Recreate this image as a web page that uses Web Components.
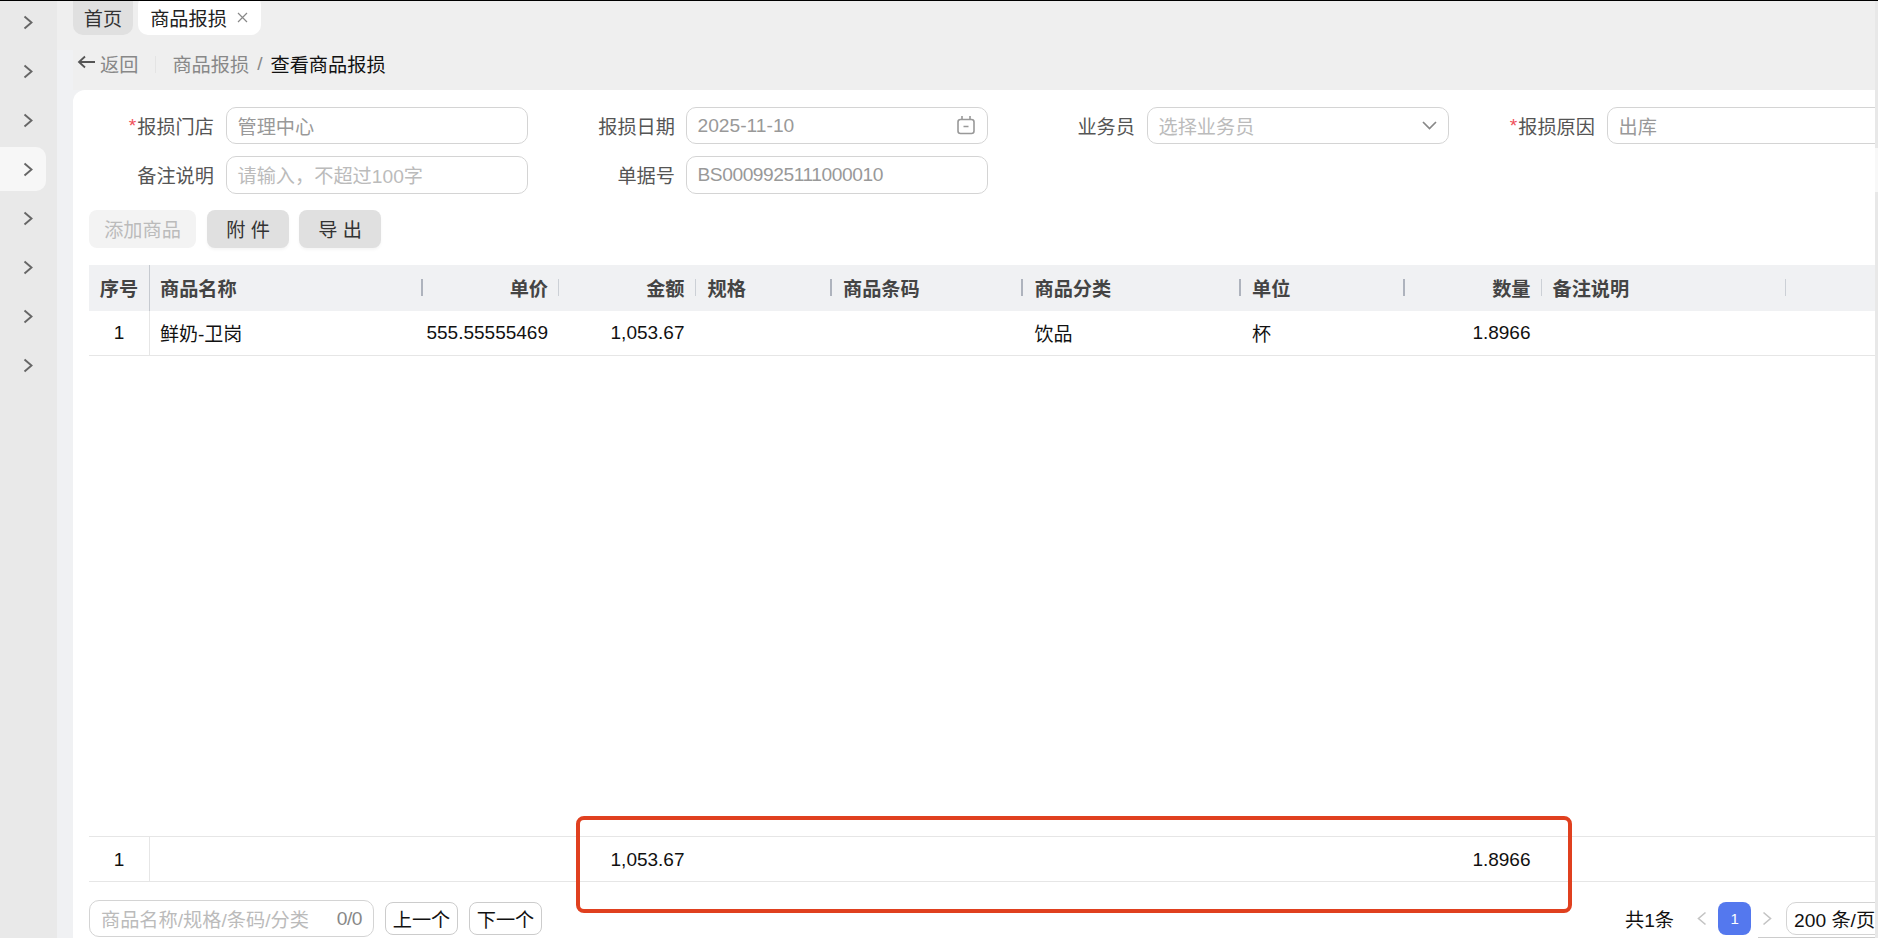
<!DOCTYPE html>
<html lang="zh">
<head>
<meta charset="utf-8">
<title>查看商品报损</title>
<style>
  html, body { margin: 0; height: 100%; overflow: hidden; }
  body { font: 19.2px "Liberation Sans", "Noto Sans CJK SC", sans-serif; color: #111; }
</style>
</head>
<body>
<app-shell>
  <side-nav slot="nav" count="8" active="3"></side-nav>
  <tab-bar slot="tabs"></tab-bar>
  <bread-crumb slot="tabs"></bread-crumb>
  <detail-card slot="card">
    <form-field slot="form" label="报损门店" required value="管理中心"></form-field>
    <form-field slot="form" label="报损日期" value="2025-11-10" icon="calendar" nudge></form-field>
    <form-field slot="form" label="业务员" placeholder="选择业务员" icon="chevron"></form-field>
    <form-field slot="form" label="报损原因" required value="出库"></form-field>
    <form-field slot="form" label="备注说明" placeholder="请输入，不超过100字"></form-field>
    <form-field slot="form" label="单据号" value="BS0009925111000010" tight nudge></form-field>
    <action-button slot="actions" disabled>添加商品</action-button>
    <action-button slot="actions">附 件</action-button>
    <action-button slot="actions">导 出</action-button>
    <goods-table slot="table"></goods-table>
    <table-footer slot="footer"></table-footer>
  </detail-card>
</app-shell>

<script>
const chevron = (dir, color, stroke) => {
  const pts = dir === 'left' ? '8.5,1.5 1.5,7.5 8.5,13.5' : '1.5,1.5 8.5,7.5 1.5,13.5';
  return `<svg width="10" height="15" viewBox="0 0 10 15" fill="none"><polyline points="${pts}" stroke="${color}" stroke-width="${stroke}"/></svg>`;
};

class AppShell extends HTMLElement {
  constructor() {
    super();
    this.attachShadow({ mode: 'open' });
    this.shadowRoot.innerHTML = `
    <style>
      :host { display: flex; height: 938px; position: relative; overflow: hidden; background: #efefef; }
      :host::before { content: ""; position: absolute; left: 0; right: 0; top: 0; height: 1px; background: #000; z-index: 3; }
      .main { flex: 1; min-width: 0; display: flex; flex-direction: column; padding-left: 16px;
        background: linear-gradient(#efefef 50px, #f0f1f3 50px); }
      .top { background: #efefef; }
      .bar { flex: 0 0 3px; background: #e8e8e8; padding-top: 148px; box-sizing: border-box; }
      .bar div { height: 44px; background: #f8f8f8; }
      .mark { position: absolute; left: 576px; top: 816px; width: 996px; height: 97px; box-sizing: border-box;
        border: 4px solid #e0401f; border-radius: 8px; z-index: 2; }
    </style>
    <slot name="nav"></slot>
    <div class="main">
      <div class="top"><slot name="tabs"></slot></div>
      <slot name="card"></slot>
    </div>
    <div class="bar"><div></div></div>
    <div class="mark"></div>`;
  }
}

class SideNav extends HTMLElement {
  connectedCallback() {
    const count = Number(this.getAttribute('count'));
    const active = Number(this.getAttribute('active'));
    let items = '';
    for (let i = 0; i < count; i++) {
      items += `<div class="item ${i === active ? 'on' : ''}">${chevron('right', '#666', 1.9)}</div>`;
    }
    this.attachShadow({ mode: 'open' }).innerHTML = `
    <style>
      :host { display: flex; flex-direction: column; gap: 5px; flex: 0 0 57px; background: #e9e9e9; }
      .item { height: 44px; width: 46px; display: flex; align-items: center; padding-left: 23px; box-sizing: border-box; border-radius: 0 10px 10px 0; }
      .on { background: #f7f7f7; }
    </style>${items}`;
  }
}

class TabBar extends HTMLElement {
  constructor() {
    super();
    this.attachShadow({ mode: 'open' });
    this.shadowRoot.innerHTML = `
    <style>
      :host { display: flex; gap: 5px; height: 35px; }
      .tab { display: flex; align-items: center; justify-content: center; gap: 10px; border-radius: 0 0 10px 10px; color: #333; background: #e0e0e0; width: 60px; }
      .cur { background: #fff; width: 123px; border-radius: 10px; margin-top: -5px; padding-top: 5px; color: #222; padding-right: 1px; box-sizing: border-box; height: 40px; }
      svg { display: block; }
    </style>
    <div class="tab">首页</div>
    <div class="tab cur">商品报损
      <svg width="11" height="11" viewBox="0 0 11 11"><path d="M1 1l9 9M10 1l-9 9" stroke="#888" stroke-width="1.2"/></svg>
    </div>`;
  }
}

class BreadCrumb extends HTMLElement {
  constructor() {
    super();
    this.attachShadow({ mode: 'open' });
    this.shadowRoot.innerHTML = `
    <style>
      :host { display: flex; align-items: center; height: 52px; padding: 3px 0 0 4px; color: #888; }
      svg { display: block; margin: -5px 5px 0 0; }
      .line { width: 1px; height: 17px; background: #e4e4e4; margin: 0 16px 0 17px; }
      .sep { margin: 0 8px; }
      .now { color: #111; }
    </style>
    <svg width="18" height="14" viewBox="0 0 18 14" fill="none"><path d="M18 7H2M8 1.5L2 7l6 5.5" stroke="#555" stroke-width="1.8"/></svg>
    <span>返回</span><div class="line"></div>
    <span>商品报损</span><span class="sep">/</span><span class="now">查看商品报损</span>`;
  }
}

class DetailCard extends HTMLElement {
  constructor() {
    super();
    this.attachShadow({ mode: 'open' });
    this.shadowRoot.innerHTML = `
    <style>
      :host { display: flex; flex-direction: column; height: 848px; background: #fff; border-radius: 12px 0 0 0; padding: 17px 0 0 16px; box-sizing: border-box; overflow: hidden; position: relative; }
      .form { display: grid; grid-template-columns: 125px 302px 134px 302px 135px 302px 134px 302px; grid-template-rows: 37px 38px; gap: 12px; }
      .actions { display: flex; gap: 10px; margin: 16px 0 17px; }
      .table { flex: 1; min-height: 0; display: flex; }
    </style>
    <div class="form"><slot name="form"></slot></div>
    <div class="actions"><slot name="actions"></slot></div>
    <div class="table"><slot name="table"></slot></div>
    <slot name="footer"></slot>`;
  }
}

class FormField extends HTMLElement {
  connectedCallback() {
    const required = this.hasAttribute('required');
    const value = this.getAttribute('value');
    const text = value || this.getAttribute('placeholder') || '';
    const icon = this.getAttribute('icon');
    let iconHtml = '';
    if (icon === 'calendar') {
      iconHtml = `<svg width="20" height="19" viewBox="0 0 20 19" fill="none" stroke="#999" stroke-width="1.6"><rect x="2" y="3.5" width="16" height="14" rx="2.5"/><path d="M6 0v4M14 0v4M7.5 10.5h5"/></svg>`;
    } else if (icon === 'chevron') {
      iconHtml = `<svg width="15" height="9" viewBox="0 0 15 9" fill="none"><polyline points="1,1 7.5,7.5 14,1" stroke="#888" stroke-width="1.7"/></svg>`;
    }
    this.attachShadow({ mode: 'open' }).innerHTML = `
    <style>
      :host { display: contents; }
      .label { display: flex; align-items: center; justify-content: flex-end; color: #555; white-space: nowrap; }
      .nudge { margin-right: -1px; }
      .req { color: #f0505a; padding-right: 1px; }
      .box { height: 100%; box-sizing: border-box; border: 1px solid #d4d4d4; border-radius: 10px; padding: 0 11px 0 10.5px; display: flex; align-items: center; justify-content: space-between; }
      .val { color: #999; white-space: nowrap; }
      .ph { color: #bbb; }
      .tight { letter-spacing: -0.45px; }
    </style>
    <div class="label ${this.hasAttribute('nudge') ? 'nudge' : ''}">${required ? '<span class="req">*</span>' : ''}${this.getAttribute('label')}</div>
    <div class="box"><span class="val ${value ? '' : 'ph'} ${this.hasAttribute('tight') ? 'tight' : ''}">${text}</span>${iconHtml}</div>`;
  }
}

class ActionButton extends HTMLElement {
  constructor() {
    super();
    this.attachShadow({ mode: 'open' });
    this.shadowRoot.innerHTML = `
    <style>
      :host { display: flex; align-items: center; justify-content: center; height: 38px; width: 82px; border-radius: 8px; background: #e0e0e0; color: #333; white-space: pre; box-shadow: 0 2px 3px rgba(0,0,0,.04); }
      :host([disabled]) { width: 107px; margin-right: 1px; background: #f3f3f3; color: #bbb; box-shadow: none; }
    </style>
    <slot></slot>`;
  }
}

const COLUMNS = [
  { title: '序号', width: 61, align: 'center', fixed: true },
  { title: '商品名称', width: 273, sep: 2, pad: 10 },
  { title: '单价', width: 136, align: 'right', sep: 1 },
  { title: '金额', width: 136.5, align: 'right', sep: 1 },
  { title: '规格', width: 136.5, sep: 2 },
  { title: '商品条码', width: 191, sep: 2, pad: 11 },
  { title: '商品分类', width: 218, sep: 2, pad: 11.5 },
  { title: '单位', width: 164, sep: 2, pad: 11 },
  { title: '数量', width: 136.5, align: 'right', sep: 1 },
  { title: '备注说明', width: 244.5, sep: 1, pad: 11 },
  { title: '', width: 73 }
];
const ROW = ['1', '鲜奶-卫岗', '555.55555469', '1,053.67', '', '', '饮品', '杯', '1.8966', '', ''];
const SUM = ['1', '', '', '1,053.67', '', '', '', '', '1.8966', '', ''];

class GoodsTable extends HTMLElement {
  connectedCallback() {
    const cell = (col, text, cls) => `<div class="c ${col.align || ''} ${col.fixed ? 'fixed' : ''}" style="width:${col.width}px;${col.pad ? `padding-left:${col.pad}px` : ''}">${text}${cls === 'h' && col.sep ? `<i style="width:${col.sep}px;background:${col.sep === 2 ? '#aeb3bd' : '#ccd0d6'}"></i>` : ''}</div>`;
    const row = (vals, cls) => `<div class="row ${cls}">${COLUMNS.map((col, i) => cell(col, vals[i], cls)).join('')}</div>`;
    this.attachShadow({ mode: 'open' }).innerHTML = `
    <style>
      :host { display: flex; flex-direction: column; flex: 1; min-width: 0; }
      .row { display: flex; height: 45px; border-bottom: 1px solid #e6e6e6; box-sizing: border-box; font-size: 19px; }
      .row.h { height: 46px; border-bottom: 0; background: #f0f1f3; color: #444; font-weight: bold; font-size: 19.2px; }
      .row.h .c { padding-bottom: 1px; }
      .row.d .c { padding-bottom: 1px; }
      .gap { flex: 1; }
      .row.s { height: 46px; border-top: 1px solid #e6e6e6; }
      .row.s .c { padding-top: 2px; }
      .c { box-sizing: border-box; padding: 0 11px 0 12px; display: flex; align-items: center; position: relative; white-space: nowrap; flex: none; }
      .right { justify-content: flex-end; }
      .center { justify-content: center; padding: 0; }
      .fixed { border-right: 1px solid #e6e6e6; }
      .h .fixed { border-right-color: #c6cad0; }
      i { position: absolute; right: 0; top: 14px; height: 17px; }
    </style>
    ${row(COLUMNS.map(c => c.title), 'h')}
    ${row(ROW, 'd')}
    <div class="gap"></div>
    ${row(SUM, 's')}`;
  }
}

class TableFooter extends HTMLElement {
  constructor() {
    super();
    this.attachShadow({ mode: 'open' });
    this.shadowRoot.innerHTML = `
    <style>
      :host { display: flex; align-items: flex-start; height: 38px; margin-top: 18px; position: relative; flex: none; }
      .search { width: 285px; height: 37px; box-sizing: border-box; border: 1px solid #d4d4d4; border-radius: 10px; padding: 0 11px; display: flex; align-items: center; justify-content: space-between; color: #bbb; }
      .search b { font-weight: normal; color: #888; letter-spacing: -0.5px; }
      .btn { height: 33px; width: 73px; margin-top: 2px; box-sizing: border-box; border: 1px solid #ccc; border-radius: 8px; display: flex; align-items: center; justify-content: center; color: #111; }
      .first { margin-left: 11px; }
      .second { margin-left: 11px; }
      .pager { position: absolute; left: 1536px; top: 2px; display: flex; align-items: center; height: 33px; white-space: nowrap; }
      .pager svg { display: block; }
      .num { width: 33px; height: 33px; border-radius: 8px; background: #5478ee; color: #fff; font-size: 15px; display: flex; align-items: center; justify-content: center; margin: 0 11px; }
      .prev { margin-left: 23px; }
      .size { margin-left: 14px; width: 120px; height: 33px; box-sizing: border-box; border: 1px solid #d4d4d4; border-radius: 10px; padding-left: 7px; display: flex; align-items: center; }
      .rule { position: absolute; right: 0; bottom: 0; width: 117px; height: 1px; background: #ccc; }
    </style>
    <div class="search"><span>商品名称/规格/条码/分类</span><b>0/0</b></div>
    <div class="btn first">上一个</div>
    <div class="btn second">下一个</div>
    <div class="pager">
      <span>共1条</span>
      <span class="prev">${chevron('left', '#c4c4c4', 1.6)}</span>
      <span class="num">1</span>
      <span>${chevron('right', '#c4c4c4', 1.6)}</span>
      <span class="size">200 条/页</span>
    </div>
    <div class="rule"></div>`;
  }
}

customElements.define('app-shell', AppShell);
customElements.define('side-nav', SideNav);
customElements.define('tab-bar', TabBar);
customElements.define('bread-crumb', BreadCrumb);
customElements.define('detail-card', DetailCard);
customElements.define('form-field', FormField);
customElements.define('action-button', ActionButton);
customElements.define('goods-table', GoodsTable);
customElements.define('table-footer', TableFooter);
</script>
</body>
</html>
